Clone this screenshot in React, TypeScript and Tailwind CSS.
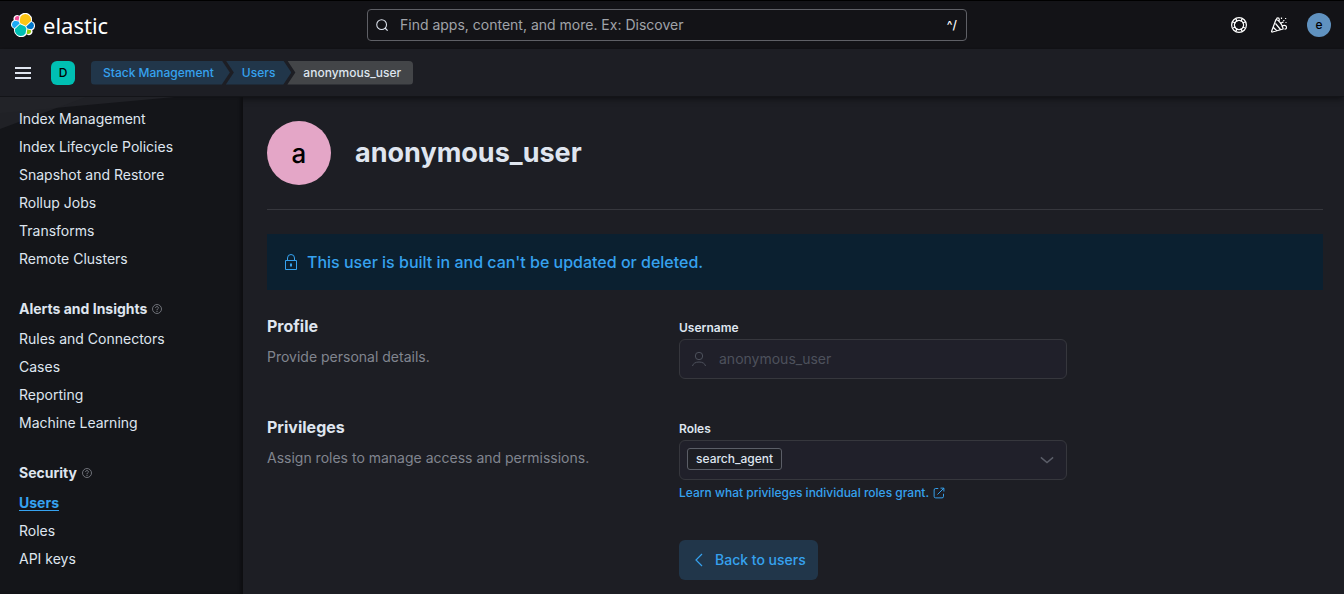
import type { ReactNode } from "react";

type NavSection = { title?: string; items: string[] };

const sections: NavSection[] = [
  {
    items: [
      "Index Management",
      "Index Lifecycle Policies",
      "Snapshot and Restore",
      "Rollup Jobs",
      "Transforms",
      "Remote Clusters",
    ],
  },
  {
    title: "Alerts and Insights",
    items: ["Rules and Connectors", "Cases", "Reporting", "Machine Learning"],
  },
  { title: "Security", items: ["Users", "Roles", "API keys"] },
];

function ElasticLogo() {
  return (
    <svg viewBox="0 0 32 32" className="size-6" aria-hidden="true">
      <path fill="#fff" d="M32 16.77a6.33 6.33 0 0 0-1.14-3.63 6.27 6.27 0 0 0-3.02-2.3 9.05 9.05 0 0 0-3.41-9.02A9.05 9.05 0 0 0 15.2.5a9.05 9.05 0 0 0-4.16 3.22 4.79 4.79 0 0 0-5.82.07 4.79 4.79 0 0 0-1.58 5.42A6.4 6.4 0 0 0 0 15.2c0 1.3.4 2.57 1.15 3.63a6.3 6.3 0 0 0 3.03 2.3 9 9 0 0 0 3.4 9.03 9.04 9.04 0 0 0 13.38-1.72 4.77 4.77 0 0 0 7.4-5.48A6.4 6.4 0 0 0 32 16.77" />
      <path fill="#fec514" d="m12.58 13.79 7 3.21 7.07-6.21a7.85 7.85 0 0 0 .15-1.56 7.75 7.75 0 0 0-7.73-7.77 7.7 7.7 0 0 0-6.36 3.36l-1.18 6.12z" />
      <path fill="#00bfb3" d="M5.33 21.23a7.96 7.96 0 0 0-.15 1.57c0 4.3 3.49 7.8 7.78 7.8a7.76 7.76 0 0 0 6.43-3.41l1.16-6.1-1.56-2.99-7.03-3.21z" />
      <path fill="#f04e98" d="m5.29 9.07 4.8 1.13 1.05-5.47a3.79 3.79 0 0 0-4.54-.02 3.82 3.82 0 0 0-1.31 4.36" />
      <path fill="#1ba9f5" d="M4.87 10.21a5.35 5.35 0 0 0-3.57 5.03 5.34 5.34 0 0 0 3.44 4.98l6.73-6.11-1.24-2.65z" />
      <path fill="#93c90e" d="M20.87 27.25a3.77 3.77 0 0 0 2.28.78 3.79 3.79 0 0 0 3.59-2.56 3.83 3.83 0 0 0-.21-2.52l-4.79-1.13z" />
      <path fill="#07c" d="m21.85 20.56 5.28 1.24a5.35 5.35 0 0 0 3.57-5.03 5.34 5.34 0 0 0-3.43-4.97l-6.9 6.06z" />
    </svg>
  );
}

function Icon({ className, children }: { className: string; children: ReactNode }) {
  return (
    <svg viewBox="0 0 16 16" fill="none" stroke="currentColor" className={className} aria-hidden="true">
      {children}
    </svg>
  );
}

function HelpIcon() {
  return (
    <Icon className="size-4">
      <circle cx="8" cy="8" r="7.4" strokeWidth="1.2" />
      <circle cx="8" cy="8" r="4.6" strokeWidth="1.2" />
      <path strokeWidth="1.3" d="m1.800 5 3 1M5 1.800l1 3M14.200 5l-3 1M11 1.800l-1 3M1.800 11l3-1M5 14.200l1-3M14.200 11l-3-1M11 14.200l-1-3" />
    </Icon>
  );
}

function CheerIcon() {
  return (
    <Icon className="size-4">
      <g strokeWidth="1.200">
        <path strokeLinejoin="round" d="M5 2.500.6 14.200c-.2.600.2 1 .8.800L12.200 12C11.500 8 8.400 3.300 5 2.500ZM4.500 6.500l5 6M2.500 10.500l3 3M5.500 2.500c0-2.200 2.700-2.200 2.800 0 .1 1-.7 1.500-.3 2.300M11 10c.2-2.300 4.300-2.200 4.500.2.100 1.500-.9 2-2 1.800M9.500 7c.3-2 2-.8 3-2.300" />
        <path d="M10.500.5v1.500M14 1.500h1.200M12.200 3.500h1.200M14.500 5.500h1" />
      </g>
    </Icon>
  );
}

function QuestionIcon() {
  return (
    <Icon className="size-[10px] text-[#7b7e86]">
      <circle cx="8" cy="8" r="7.200" strokeWidth="1.400" />
      <path strokeWidth="1.600" d="M5.700 6.300C5.800 3.400 10.300 3.500 10.200 6.200 10.100 8 8 7.900 8 10M8 11.200v1.600" />
    </Icon>
  );
}

function Header() {
  return (
    <header>
      <div className="grid h-[49px] grid-cols-[1fr_600px_1fr] items-center border-t border-black bg-[#131317] pr-[13px] pl-[3px]">
        <a href="#" className="flex items-center gap-2 justify-self-start px-2 text-white">
          <ElasticLogo />
          <span className="font-['Noto_Sans','Open_Sans',sans-serif] text-[22px] leading-6">elastic</span>
        </a>
        <div className="flex h-8 items-center rounded border border-[#5f6066] pr-[9px] pl-2">
          <Icon className="size-3 text-[#dfe5ef]">
            <circle cx="7.500" cy="7.500" r="6.500" strokeWidth="1.400" />
            <path strokeWidth="1.600" d="m12 12 3.500 3.500" />
          </Icon>
          <input
            type="search"
            aria-label="Find apps, content, and more"
            placeholder="Find apps, content, and more. Ex: Discover"
            className="ml-3 min-w-0 flex-1 bg-transparent text-sm text-[#dfe5ef] outline-none placeholder:text-[#a0a3a9] placeholder:opacity-100"
          />
          <span className="text-xs font-medium text-white">^/</span>
        </div>
        <div className="flex items-center gap-6 justify-self-end text-white">
          <button type="button" aria-label="Help"><HelpIcon /></button>
          <button type="button" aria-label="News"><CheerIcon /></button>
          <button type="button" aria-label="Account" className="-ml-1 flex size-6 items-center justify-center rounded-full bg-[#6092c0] text-xs font-medium text-black">
            e
          </button>
        </div>
      </div>
      <div className="flex h-12 items-center border-b border-[#131418] bg-[#1d1e24] pl-[15px] shadow-md shadow-black/30">
        <button type="button" aria-label="Open navigation" className="text-[#dfe5ef]">
          <Icon className="size-4">
            <path strokeWidth="2" d="M0 3h16M0 8h16M0 13h16" />
          </Icon>
        </button>
        <button type="button" aria-label="Default space" className="ml-5 flex size-6 items-center justify-center rounded-md bg-[#00bfb3] text-xs font-medium text-black">
          D
        </button>
        <nav aria-label="Breadcrumbs" className="ml-4 flex text-xs leading-6 font-medium">
          <a href="#" className="rounded-l bg-[#21364a] pr-4 pl-3 text-[#36a2ef] [clip-path:polygon(0_0,calc(100%-8px)_0,100%_50%,calc(100%-8px)_100%,0_100%)]">
            Stack Management
          </a>
          <a href="#" className="-ml-1 bg-[#21364a] px-4 text-[#36a2ef] [clip-path:polygon(0_0,calc(100%-8px)_0,100%_50%,calc(100%-8px)_100%,0_100%,8px_50%)]">
            Users
          </a>
          <span aria-current="page" className="-ml-1 rounded-r bg-[#434548] pr-3 pl-4 text-[#dfe5ef] [clip-path:polygon(0_0,100%_0,100%_100%,0_100%,8px_50%)]">
            anonymous_user
          </span>
        </nav>
      </div>
    </header>
  );
}

function Sidebar() {
  return (
    <aside className="relative w-[243px] shrink-0 bg-[#141519] shadow-[inset_-3px_0_3px_rgba(0,0,0,0.3)]">
      <svg viewBox="0 0 243 32" className="absolute top-0 left-0 h-8 w-full" aria-hidden="true">
        <path d="M0 0h175L0 16Z" fill="#202126" />
        <path d="M0 0h86L0 32Z" fill="#232429" opacity=".8" />
      </svg>
      <nav aria-label="Stack Management" className="relative flex flex-col gap-[22px] pt-2 pl-[19px] text-sm text-[#dfe5ef]">
        {sections.map((section, i) => (
          <section key={i}>
            {section.title && (
              <h2 className="mb-[2px] flex h-7 items-center gap-[5px] font-bold">
                {section.title}
                <QuestionIcon />
              </h2>
            )}
            <ul>
              {section.items.map((item) => (
                <li key={item} className="flex h-7 items-center">
                  <a
                    href="#"
                    aria-current={item === "Users" ? "page" : undefined}
                    className={item === "Users" ? "font-bold text-[#36a2ef] underline underline-offset-2" : ""}
                  >
                    {item}
                  </a>
                </li>
              ))}
            </ul>
          </section>
        ))}
      </nav>
    </aside>
  );
}

function FormGroup({ title, text, children }: { title: string; text: string; children: ReactNode }) {
  return (
    <section className="flex max-w-[800px] gap-6">
      <div className="flex-1">
        <h2 className="text-base leading-6 font-bold text-[#dfe5ef]">{title}</h2>
        <p className="mt-2 text-sm leading-[22px] text-[#81858f]">{text}</p>
      </div>
      <div className="flex-1 pt-1">{children}</div>
    </section>
  );
}

export default function App() {
  return (
    <div className="flex min-h-screen flex-col bg-[#1d1e24] font-['Inter',sans-serif] text-[#dfe5ef]">
      <Header />
      <div className="flex flex-1">
        <Sidebar />
        <main className="min-w-0 flex-1 pt-6 pr-[21px] pb-[14px] pl-6">
          <div className="flex items-center gap-6 border-b border-[#36373d] pb-6">
            <div className="flex size-16 items-center justify-center rounded-full bg-[#e4a6c7] text-[26px] font-medium text-black">
              a
            </div>
            <h1 className="text-[27px] leading-8 font-bold">anonymous_user</h1>
          </div>
          <div className="mt-6 flex h-14 items-center gap-2 bg-[#0b2030] px-4 font-medium text-[#36a2ef]">
            <Icon className="size-4">
              <path d="M2.500 6.500h11v9h-11ZM4.500 6.500V4a3.500 3.500 0 0 1 7 0v2.500" />
              <path strokeWidth="2" d="M8 9.500v3" />
            </Icon>
            <p>This user is built in and can't be updated or deleted.</p>
          </div>
          <form className="mt-6">
            <div className="flex flex-col gap-9">
              <FormGroup title="Profile" text="Provide personal details.">
                <label htmlFor="username" className="block text-xs leading-5 font-semibold">Username</label>
                <div className="mt-[1px] flex h-10 items-center gap-3 rounded-md border border-[#36373d] bg-[#20202a] px-[11px] text-[#4d515c]">
                  <Icon className="size-4">
                    <circle cx="8" cy="5" r="3.700" />
                    <path d="M1.500 15c.5-2.500 3-4 6.500-4s6 1.500 6.500 4" />
                  </Icon>
                  <input id="username" disabled defaultValue="anonymous_user" className="min-w-0 flex-1 bg-transparent text-sm" />
                </div>
              </FormGroup>
              <FormGroup title="Privileges" text="Assign roles to manage access and permissions.">
                <label htmlFor="roles" className="block text-xs leading-5 font-semibold">Roles</label>
                <button id="roles" type="button" disabled aria-haspopup="listbox" className="mt-[1px] flex h-10 w-full items-center justify-between rounded-md border border-[#36373d] bg-[#20202a] pr-3 pl-[7px]">
                  <span className="mb-[2px] rounded-[3px] border border-[#5b5e67] bg-[#1d1e24] px-2 text-xs leading-5 font-medium">search_agent</span>
                  <Icon className="size-[14px] text-[#5b5e69]">
                    <path strokeWidth="1.600" d="m1 5 7 6 7-6" />
                  </Icon>
                </button>
                <a href="#" className="mt-[3px] flex items-center gap-1 text-xs leading-5 font-medium text-[#36a2ef]">
                  Learn what privileges individual roles grant.
                  <Icon className="size-3">
                    <path strokeWidth="1.300" d="M7 2H3.500Q1.500 2 1.500 4v8.500q0 2 2 2H12q2 0 2-2V9M10 1.500h4.500V6M14.500 1.500 6 10" />
                  </Icon>
                </a>
              </FormGroup>
            </div>
            <div className="mt-[37px] flex max-w-[800px] gap-6">
              <div className="flex-1" />
              <div className="flex-1">
                <button type="button" className="flex h-10 items-center gap-2 rounded-md bg-[#21364a] px-3 text-sm font-medium text-[#36a2ef]">
                  <Icon className="size-4">
                    <path strokeWidth="1.200" d="M11 2 5 8l6 6" />
                  </Icon>
                  Back to users
                </button>
              </div>
            </div>
          </form>
        </main>
      </div>
    </div>
  );
}
